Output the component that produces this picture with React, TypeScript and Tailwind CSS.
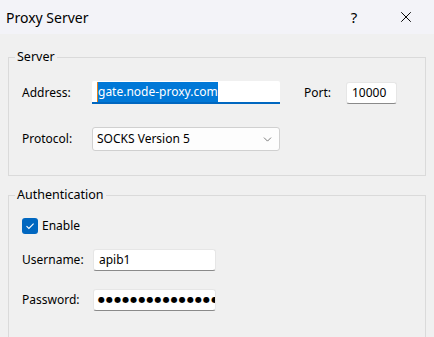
import { ChevronDown, X } from 'lucide-react';

const font = "font-['Noto_Sans','Open_Sans',sans-serif]";

function TextBox({ value, width, dots = false }: { value: string; width: string; dots?: boolean }) {
  return (
    <div
      className={`${width} h-[22px] flex items-center overflow-hidden whitespace-nowrap bg-white rounded-[3px] border border-[#e6e6e6] border-b-[#8a8a8a] ${
        dots ? "pl-[4px] text-[8px] tracking-[1.1px] font-['DejaVu_Sans',sans-serif]" : 'px-[5px] text-[12px]'
      }`}
    >
      {value}
    </div>
  );
}

function Group({ title, children, className }: { title: string; children: React.ReactNode; className?: string }) {
  return (
    <fieldset className={`mx-[8px] border border-[#dadada] ${className ?? ''}`}>
      <legend className="-ml-[7px] px-[2px] text-[12.5px] leading-[18px]">{title}</legend>
      {children}
    </fieldset>
  );
}

export default function App() {
  return (
    <div className={`w-[434px] h-[337px] overflow-hidden bg-[#f0f0f0] text-black ${font}`}>
      <div className="h-[34px] bg-[#f3f3f8] flex items-center pl-[6px]">
        <span className="text-[14px] flex-1">Proxy Server</span>
        <span className="w-[30px] text-center text-[15px] mr-[28px]">?</span>
        <X className="w-[18px] h-[18px] mr-[19px]" strokeWidth={1.3} />
      </div>

      <Group title="Server" className="mt-[14px] pt-[15px] pb-[24px] px-[13px]">
        <div className="flex items-center text-[12px]">
          <span className="w-[70px]">Address:</span>
          <div className="w-[188px] h-[23px] bg-white border-b-2 border-[#0067c0] rounded-t-[2px] flex items-center pl-[5px]">
            <span className="h-[20px] leading-[20px] bg-[#0078d7] text-white border-l border-[#e08020]">gate.node-proxy.com</span>
          </div>
          <span className="ml-[24px] w-[42px]">Port:</span>
          <TextBox value="10000" width="w-[51px]" />
        </div>
        <div className="flex items-center text-[12px] mt-[23px]">
          <span className="w-[70px]">Protocol:</span>
          <div className="w-[188px] h-[24px] bg-[#fdfdfd] border border-[#d0d0d0] rounded-[3px] flex items-center pl-[4px] pr-[5px]">
            <span className="flex-1">SOCKS Version 5</span>
            <ChevronDown className="w-[13px] h-[13px] text-[#555]" strokeWidth={1.4} />
          </div>
        </div>
      </Group>

      <Group title="Authentication" className="mt-[10px] pt-[13px] pb-[24px] px-[13px] h-[160px]">
        <div className="flex items-center text-[12px]">
          <div className="w-[16px] h-[16px] rounded-[3px] bg-[#0067c0] flex items-center justify-center">
            <svg width="10" height="8" viewBox="0 0 10 8" fill="none">
              <path d="M1.5 4.2 L3.9 6.4 L8.6 1.6" stroke="white" strokeWidth="1.1" />
            </svg>
          </div>
          <span className="ml-[4px]">Enable</span>
        </div>
        <div className="flex items-center text-[12px] mt-[14px]">
          <span className="w-[71px]">Username:</span>
          <TextBox value="apib1" width="w-[123px]" />
        </div>
        <div className="flex items-center text-[12px] mt-[18px]">
          <span className="w-[71px]">Password:</span>
          <TextBox value="●●●●●●●●●●●●●●●●" width="w-[123px]" dots />
        </div>
      </Group>
    </div>
  );
}
